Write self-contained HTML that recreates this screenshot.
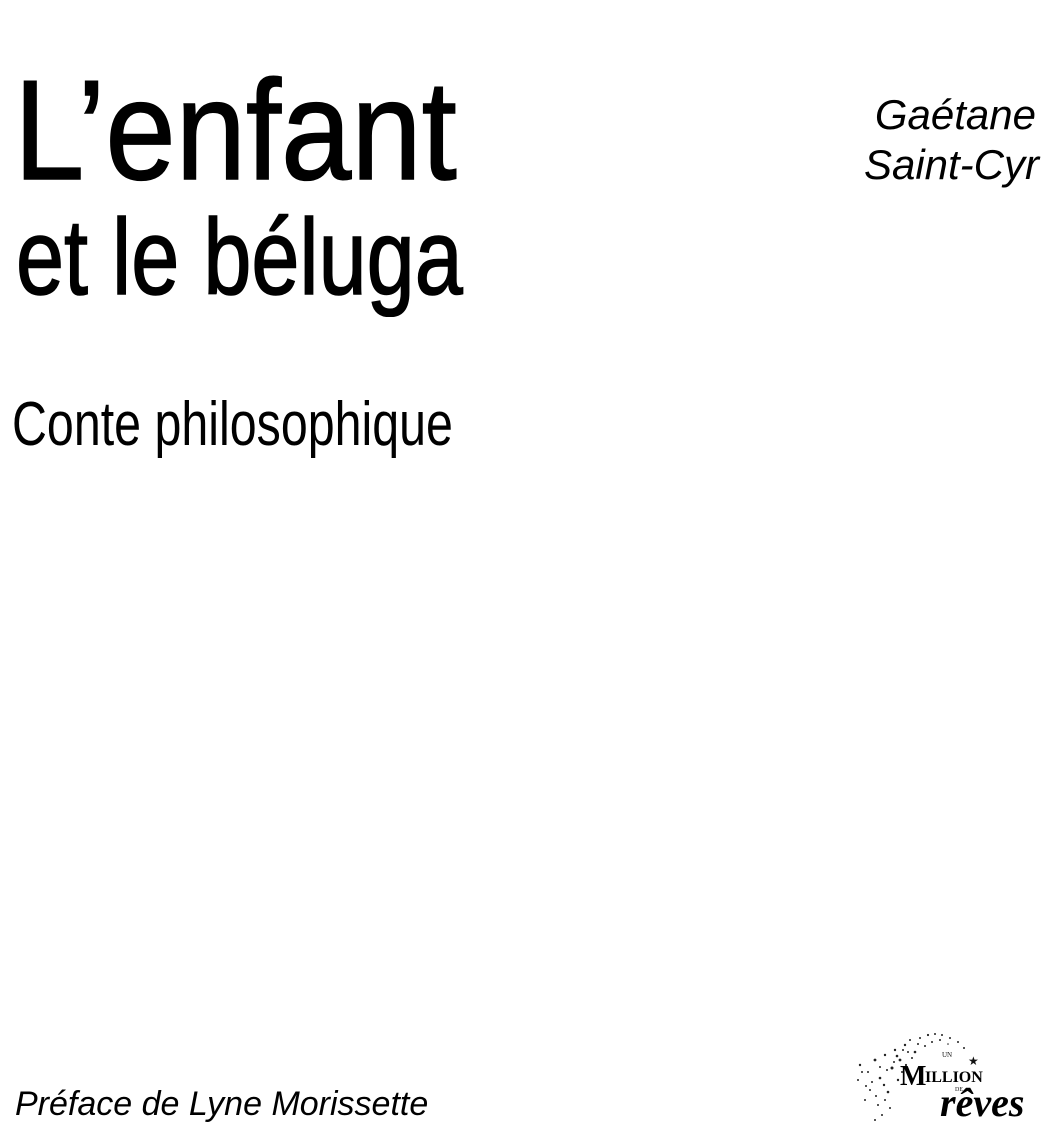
<!DOCTYPE html>
<html><head><meta charset="utf-8"><style>
html,body{margin:0;padding:0;background:#fff;}
body{width:1057px;height:1142px;position:relative;overflow:hidden;font-family:"Liberation Sans",sans-serif;color:#000;}
.t{position:absolute;white-space:nowrap;transform-origin:0 0;line-height:1;}
</style></head><body>
<div class="t" style="left:14px;top:60px;font-size:142px;-webkit-text-stroke:1.5px #000;transform:scaleX(0.89);">L’enfant</div>
<div class="t" style="left:16px;top:203px;font-size:108px;-webkit-text-stroke:1.5px #000;transform:scaleX(0.8);">et le béluga</div>
<div class="t" style="left:12px;top:394px;font-size:62px;transform:scaleX(0.78);">Conte philosophique</div>
<div class="t" style="right:21px;top:94px;font-size:42px;font-style:italic;text-align:right;">Gaétane</div>
<div class="t" style="right:18px;top:144px;font-size:42px;font-style:italic;text-align:right;">Saint-Cyr</div>
<div class="t" style="left:15px;top:1087px;font-size:34px;font-style:italic;transform:scaleX(1.0);">Préface de Lyne Morissette</div>
<svg style="position:absolute;left:840px;top:1020px" width="210" height="110">
<g fill="#222">
<circle cx="20" cy="45" r="1.2"/><circle cx="28" cy="52" r="1"/><circle cx="35" cy="40" r="1.4"/><circle cx="18" cy="60" r="1"/><circle cx="40" cy="58" r="1.3"/><circle cx="30" cy="70" r="1"/><circle cx="45" cy="35" r="1.2"/><circle cx="52" cy="48" r="1.5"/><circle cx="25" cy="80" r="1"/><circle cx="38" cy="85" r="1"/><circle cx="48" cy="72" r="1.3"/><circle cx="55" cy="30" r="1.2"/><circle cx="60" cy="40" r="1.4"/><circle cx="65" cy="25" r="1.2"/><circle cx="58" cy="60" r="1.2"/><circle cx="70" cy="20" r="1"/><circle cx="75" cy="32" r="1.3"/><circle cx="80" cy="18" r="1"/><circle cx="88" cy="15" r="1.1"/><circle cx="95" cy="14" r="1"/><circle cx="102" cy="15" r="1"/><circle cx="110" cy="18" r="1"/><circle cx="118" cy="22" r="1"/><circle cx="124" cy="28" r="1"/><circle cx="42" cy="95" r="1"/><circle cx="35" cy="100" r="1"/><circle cx="50" cy="88" r="1"/><circle cx="66" cy="45" r="1.1"/><circle cx="72" cy="38" r="1"/><circle cx="85" cy="26" r="1"/><circle cx="92" cy="22" r="1"/><circle cx="62" cy="52" r="1"/><circle cx="44" cy="65" r="1.2"/><circle cx="32" cy="62" r="1"/>
<circle cx="54" cy="42" r="1"/><circle cx="47" cy="50" r="1"/><circle cx="68" cy="32" r="1"/><circle cx="78" cy="24" r="1"/><circle cx="40" cy="47" r="1"/><circle cx="26" cy="66" r="1"/><circle cx="57" cy="36" r="1.3"/><circle cx="63" cy="30" r="1"/><circle cx="36" cy="76" r="1"/><circle cx="22" cy="52" r="1"/><circle cx="45" cy="80" r="1"/><circle cx="100" cy="20" r="1"/><circle cx="108" cy="24" r="0.8"/>
</g>
<text x="128" y="45" font-size="12" font-family="Liberation Serif" fill="#111">★</text>
<text x="102" y="37" font-size="7" font-family="Liberation Serif" fill="#111">UN</text>
<text x="60" y="65" font-size="28" font-family="Liberation Serif" font-weight="bold" fill="#000">M</text>
<text x="85" y="62" font-size="16" font-family="Liberation Serif" font-weight="bold" fill="#000">ILLION</text>
<text x="115" y="71" font-size="6" font-family="Liberation Serif" fill="#111">DE</text>
<text x="100" y="96" font-size="40" font-family="Liberation Serif" font-style="italic" font-weight="bold" fill="#000">rêves</text>
</svg>
</body></html>
